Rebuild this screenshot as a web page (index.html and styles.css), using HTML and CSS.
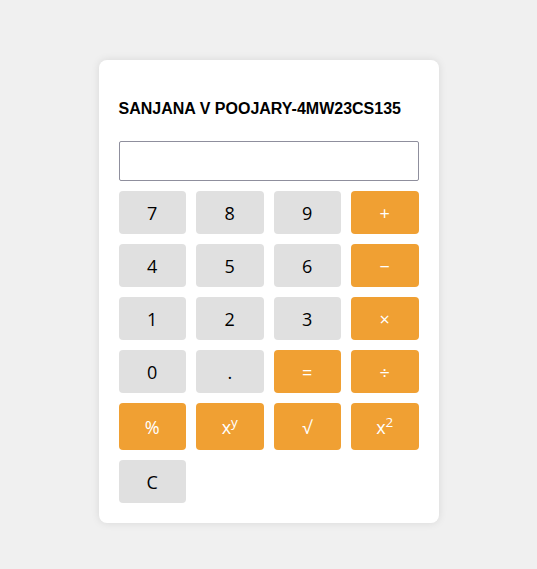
FILE: index.html
```html
<!DOCTYPE html>
<html>
<head>
<meta charset="utf-8">
<link rel="stylesheet" href="styles.css">
</head>
<body>
<div class="calc">
  <h3 class="title">SANJANA V POOJARY-4MW23CS135</h3>
  <input class="display" type="text">
  <div class="keys">
    <button class="key">7</button>
    <button class="key">8</button>
    <button class="key">9</button>
    <button class="key op">+</button>
    <button class="key">4</button>
    <button class="key">5</button>
    <button class="key">6</button>
    <button class="key op">&minus;</button>
    <button class="key">1</button>
    <button class="key">2</button>
    <button class="key">3</button>
    <button class="key op">&times;</button>
    <button class="key">0</button>
    <button class="key">.</button>
    <button class="key op">=</button>
    <button class="key op">&divide;</button>
    <button class="key op">%</button>
    <button class="key op">x<sup>y</sup></button>
    <button class="key op">&radic;</button>
    <button class="key op">x<sup>2</sup></button>
    <button class="key">C</button>
  </div>
</div>
</body>
</html>
```
FILE: styles.css
```css
html, body {
  margin: 0;
  padding: 0;
}
body {
  background: #f0f0f0;
  display: flex;
  justify-content: center;
  align-items: flex-start;
  padding-top: 60px;
  min-height: 569px;
  box-sizing: border-box;
}
.calc {
  width: 300px;
  padding: 20px;
  background: #ffffff;
  border-radius: 8px;
  box-shadow: 0 0 8px rgba(0, 0, 0, 0.1);
  display: flex;
  flex-direction: column;
}
.title {
  font-family: "Liberation Sans", Arial, sans-serif;
  font-weight: bold;
  font-size: 16px;
  margin: 20px 0 23px 0;
  color: #000;
  line-height: 18px;
}
.display {
  box-sizing: border-box;
  width: 300px;
  height: 40px;
  border: 1px solid #8f8f9d;
  border-radius: 2px;
  margin: 0 0 10px 0;
  padding: 0 8px;
  font-size: 18px;
}
.keys {
  display: grid;
  grid-template-columns: repeat(4, 1fr);
  grid-template-rows: repeat(4, 43px) 47px 43px;
  gap: 10px;
}
.key {
  font-family: "Open Sans", sans-serif;
  font-size: 18px;
  border: none;
  border-radius: 4px;
  background: #e0e0e0;
  color: #000;
  padding: 0;
  line-height: 24px;
}
.key.op {
  background: #f0a033;
  color: #fff;
}
.key sup {
  font-size: 0.75em;
  line-height: 1;
}
```
